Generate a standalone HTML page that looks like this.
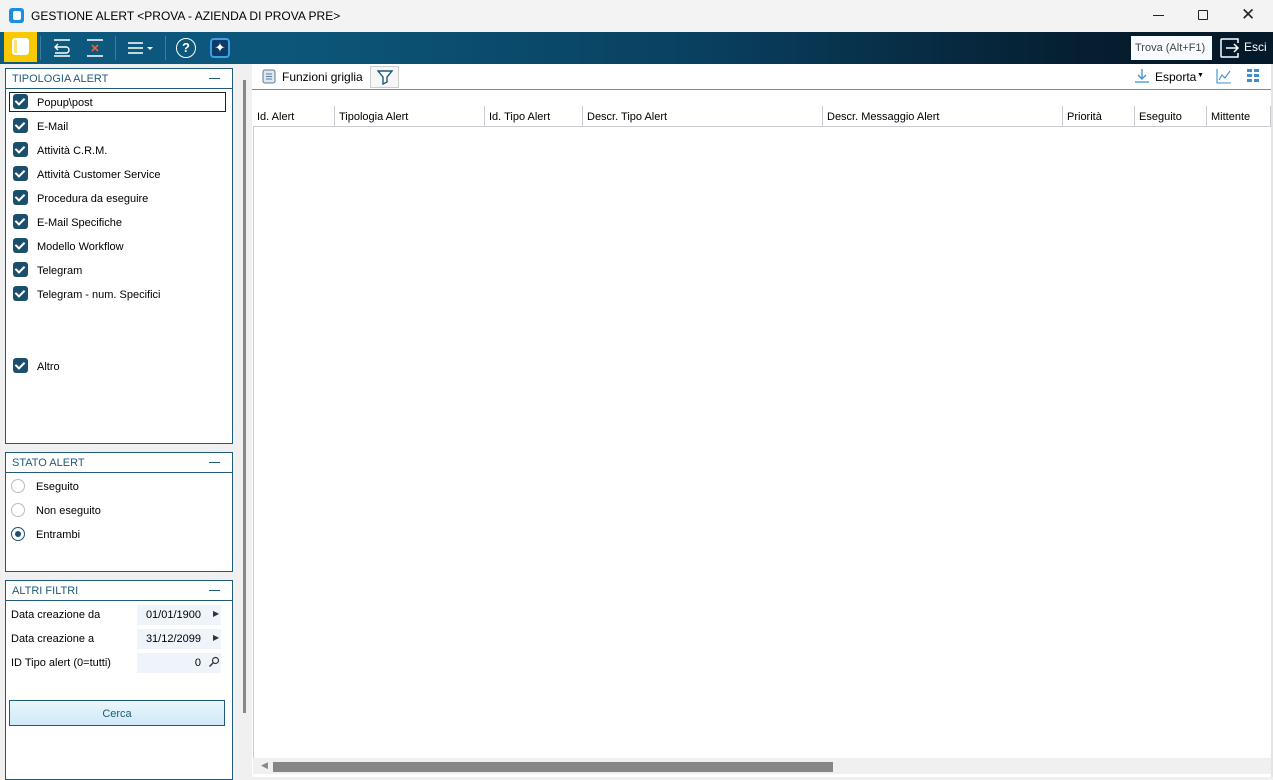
<!DOCTYPE html>
<html><head><meta charset="utf-8"><style>
*{box-sizing:border-box;margin:0;padding:0}
body{width:1273px;height:777px;overflow:hidden;background:#f0f0f0;font-family:"Liberation Sans",Tahoma,sans-serif;font-size:11px;color:#000;position:relative}
.abs{position:absolute}
.title{left:0;top:0;width:1273px;height:32px;background:#f3f3f3;font-size:12px}
.tb{left:0;top:32px;width:1273px;height:32px;background:linear-gradient(90deg,#0d5a80 0%,#0c5578 25%,#094060 55%,#061e30 85%,#04192a 100%)}
.panel{background:#fff;border:1px solid #1f5a78}
.ph{height:20px;border-bottom:1px solid #1f5a78;color:#1f5a78;font-size:11px;padding:4px 0 0 6px;position:relative}
.ph:after{content:"";position:absolute;right:12px;top:9px;width:11px;height:1px;background:#1f5a78}
.cb{position:absolute;left:7px;width:15px;height:15px;background:#1c4f6e;border-radius:3px}
.cb:after{content:"";position:absolute;left:4px;top:2px;width:4px;height:7px;border:solid #fff;border-width:0 2px 2px 0;transform:rotate(45deg)}
.lbl{position:absolute;left:31px;margin-top:1px}
.rd{position:absolute;left:5px;width:14px;height:14px;border:1px solid #bbb;border-radius:50%;background:#fff}
.hdr{position:absolute;top:106px;height:21px;border-right:1px solid #c8ccd2;border-bottom:1px solid #c8ccd2;padding:5px 0 0 4px;background:#fff}
.fld{position:absolute;left:137px;width:84px;height:20px;background:#eef4fa;text-align:right;padding:4px 20px 0 0}
</style></head><body>
<div class="abs title">
 <div class="abs" style="left:9px;top:8px;width:15px;height:15px;background:#1a8ee0;border-radius:3px"><div class="abs" style="left:4px;top:3px;width:8px;height:9px;background:#fff;border-radius:2px"></div></div>
 <div class="abs" style="left:31px;top:9px">GESTIONE ALERT &lt;PROVA - AZIENDA DI PROVA PRE&gt;</div>
 <div class="abs" style="left:1153px;top:15px;width:11px;height:1px;background:#222"></div>
 <div class="abs" style="left:1198px;top:10px;width:10px;height:10px;border:1px solid #222;border-radius:1px"></div>
 <div class="abs" style="left:1241px;top:5px;font-size:17px;color:#222">✕</div>
</div>
<div class="abs tb">
 <div class="abs" style="left:4px;top:0;width:33px;height:30px;background:#f8c800"></div>
 <div class="abs" style="left:12px;top:6px;width:17px;height:17px;border:2px solid #fff;border-radius:3px;background:#fde27a"><div class="abs" style="left:3px;top:0;width:10px;height:13px;background:#fff"></div></div>
 <div class="abs" style="left:40px;top:4px;width:1px;height:24px;background:#3b7ea0"></div>
 <svg class="abs" style="left:52px;top:6px" width="20" height="20"><path d="M2 2H18M6 6L3 9L6 12M3 9H14a3 3 0 0 1 0 6H3M2 18H18" stroke="#fff" stroke-width="1.4" fill="none"/></svg>
 <svg class="abs" style="left:85px;top:6px" width="20" height="20"><path d="M2 2H18M2 18H18" stroke="#fff" stroke-width="1.4"/><path d="M7 7L13 13M13 7L7 13" stroke="#e8642c" stroke-width="1.6"/></svg>
 <div class="abs" style="left:115px;top:4px;width:1px;height:24px;background:#3b7ea0"></div>
 <svg class="abs" style="left:127px;top:8px" width="30" height="16"><path d="M1 3H16M1 8H16M1 13H16" stroke="#fff" stroke-width="1.5"/><path d="M20 7H26L23 10Z" fill="#fff"/></svg>
 <div class="abs" style="left:165px;top:4px;width:1px;height:24px;background:#3b7ea0"></div>
 <div class="abs" style="left:176px;top:6px;width:20px;height:20px;border:1.5px solid #fff;border-radius:50%;color:#fff;font-size:13px;font-weight:bold;text-align:center;line-height:18px">?</div>
 <div class="abs" style="left:210px;top:6px;width:20px;height:20px;border:2px solid #3aa0e8;border-radius:4px;background:#0e3a66;color:#fff;text-align:center;line-height:16px;font-size:13px">✦</div>
 <div class="abs" style="left:1131px;top:4px;width:81px;height:24px;background:#f7fbff;color:#444;padding:6px 0 0 4px;font-size:11px">Trova (Alt+F1)</div>
 <svg class="abs" style="left:1219px;top:5px" width="22" height="22"><path d="M10 2H3a1 1 0 0 0-1 1V19a1 1 0 0 0 1 1H10M7 11H19M15 7L19 11L15 15M10 2H19V6M10 20H19V16" stroke="#fff" stroke-width="1.5" fill="none"/></svg>
 <div class="abs" style="left:1244px;top:8px;color:#fff;font-size:12px">Esci</div>
</div>

<div class="abs panel" style="left:5px;top:68px;width:228px;height:376px">
 <div class="ph">TIPOLOGIA ALERT</div>
 <div class="abs" style="left:3px;top:23px;width:217px;height:20px;border:1px solid #222"></div>
 <div class="cb" style="top:25px"></div><div class="lbl" style="top:27px">Popup\post</div>
 <div class="cb" style="top:49px"></div><div class="lbl" style="top:51px">E-Mail</div>
 <div class="cb" style="top:73px"></div><div class="lbl" style="top:75px">Attività C.R.M.</div>
 <div class="cb" style="top:97px"></div><div class="lbl" style="top:99px">Attività Customer Service</div>
 <div class="cb" style="top:121px"></div><div class="lbl" style="top:123px">Procedura da eseguire</div>
 <div class="cb" style="top:145px"></div><div class="lbl" style="top:147px">E-Mail Specifiche</div>
 <div class="cb" style="top:169px"></div><div class="lbl" style="top:171px">Modello Workflow</div>
 <div class="cb" style="top:193px"></div><div class="lbl" style="top:195px">Telegram</div>
 <div class="cb" style="top:217px"></div><div class="lbl" style="top:219px">Telegram - num. Specifici</div>
 <div class="cb" style="top:289px"></div><div class="lbl" style="top:291px">Altro</div>
</div>
<div class="abs panel" style="left:5px;top:452px;width:228px;height:120px">
 <div class="ph">STATO ALERT</div>
 <div class="rd" style="top:26px"></div><div class="lbl" style="left:30px;top:27px">Eseguito</div>
 <div class="rd" style="top:50px"></div><div class="lbl" style="left:30px;top:51px">Non eseguito</div>
 <div class="rd" style="top:74px;border-color:#1c4f6e"><div class="abs" style="left:3px;top:3px;width:6px;height:6px;border-radius:50%;background:#1c4f6e"></div></div><div class="lbl" style="left:30px;top:75px">Entrambi</div>
</div>
<div class="abs panel" style="left:5px;top:580px;width:228px;height:200px">
 <div class="ph">ALTRI FILTRI</div>
 <div class="abs" style="left:5px;top:28px">Data creazione da</div>
 <div class="fld" style="top:24px;left:131px">01/01/1900</div><div class="abs" style="left:207px;top:28px;font-size:8px;color:#333">▶</div>
 <div class="abs" style="left:5px;top:52px">Data creazione a</div>
 <div class="fld" style="top:48px;left:131px">31/12/2099</div><div class="abs" style="left:207px;top:52px;font-size:8px;color:#333">▶</div>
 <div class="abs" style="left:5px;top:76px">ID Tipo alert (0=tutti)</div>
 <div class="fld" style="top:72px;left:131px">0</div>
 <svg class="abs" style="left:202px;top:75px" width="12" height="12"><circle cx="7.5" cy="4.5" r="3" stroke="#333" stroke-width="1.2" fill="none"/><path d="M5.5 6.5L1.5 10.5" stroke="#333" stroke-width="1.5"/></svg>
 <div class="abs" style="left:3px;top:119px;width:216px;height:26px;border:1px solid #1f5a78;background:linear-gradient(#eaf6fd,#cfe9f8);color:#1f5a78;text-align:center;padding-top:7px;font-size:11px">Cerca</div>
</div>

<div class="abs" style="left:243px;top:80px;width:3px;height:633px;background:#888"></div>

<div class="abs" style="left:252px;top:64px;width:1021px;height:713px;background:#fff"></div>
<div class="abs" style="left:252px;top:89px;width:1021px;height:1px;background:#888"></div>
<svg class="abs" style="left:262px;top:69px" width="14" height="15"><rect x="1" y="1" width="12" height="13" rx="2" fill="#dfe7f0" stroke="#5b7a95"/><path d="M4 5H10M4 7.5H10M4 10H10" stroke="#5b7a95"/></svg>
<div class="abs" style="left:282px;top:70px;font-size:12px">Funzioni griglia</div>
<div class="abs" style="left:370px;top:66px;width:29px;height:22px;border:1px solid #ccc;background:#f6f6f6"></div>
<svg class="abs" style="left:377px;top:69px" width="16" height="16"><path d="M1 2H15L10 8V13L6 15V8Z" fill="#fff" stroke="#1f5a78" stroke-width="1.4"/></svg>
<svg class="abs" style="left:1134px;top:68px" width="16" height="16"><path d="M8 1V11M4 7L8 11L12 7M1 14H15" stroke="#3d8fd0" stroke-width="1.3" fill="none"/></svg>
<div class="abs" style="left:1155px;top:70px;font-size:12px">Esporta</div><div class="abs" style="left:1197px;top:72px;font-size:7px">▼</div>
<svg class="abs" style="left:1216px;top:68px" width="16" height="16"><path d="M1 1V15H15M3 12L6 7L9 10L14 3" stroke="#3d8fd0" stroke-width="1.1" fill="none"/></svg>
<svg class="abs" style="left:1247px;top:69px" width="12" height="14"><g fill="#3d8fd0"><rect x="0" y="0" width="5" height="3"/><rect x="7" y="0" width="5" height="3"/><rect x="0" y="5" width="5" height="3"/><rect x="7" y="5" width="5" height="3"/><rect x="0" y="10" width="5" height="3"/><rect x="7" y="10" width="5" height="3"/></g></svg>

<div class="abs" style="left:253px;top:106px;width:1018px;height:1px;background:#c8ccd2"></div>
<div class="abs" style="left:253px;top:106px;width:1px;height:652px;background:#c8ccd2"></div>
<div class="hdr" style="left:253px;width:82px">Id. Alert</div>
<div class="hdr" style="left:335px;width:150px">Tipologia Alert</div>
<div class="hdr" style="left:485px;width:98px">Id. Tipo Alert</div>
<div class="hdr" style="left:583px;width:240px">Descr. Tipo Alert</div>
<div class="hdr" style="left:823px;width:240px">Descr. Messaggio Alert</div>
<div class="hdr" style="left:1063px;width:72px">Priorità</div>
<div class="hdr" style="left:1135px;width:72px">Eseguito</div>
<div class="hdr" style="left:1207px;width:64px">Mittente</div>

<div class="abs" style="left:253px;top:758px;width:1018px;height:16px;background:#f0f0f0"></div>
<div class="abs" style="left:261px;top:760px;font-size:9px;color:#888">◀</div>
<div class="abs" style="left:273px;top:762px;width:560px;height:10px;background:#868686"></div>
<div class="abs" style="left:1271px;top:64px;width:2px;height:713px;background:#e4e4e4"></div>
</body></html>
